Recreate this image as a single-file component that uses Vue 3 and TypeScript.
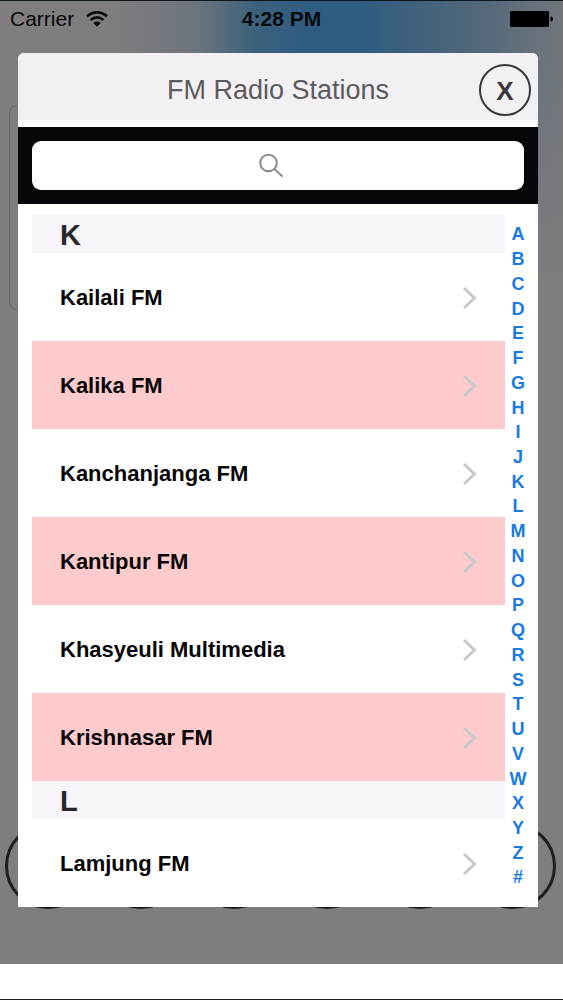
<script setup lang="ts">
import { ref } from 'vue'

interface Section {
  letter: string
  stations: string[]
}

const sections: Section[] = [
  {
    letter: 'K',
    stations: [
      'Kailali FM',
      'Kalika FM',
      'Kanchanjanga FM',
      'Kantipur FM',
      'Khasyeuli Multimedia',
      'Krishnasar FM',
    ],
  },
  { letter: 'L', stations: ['Lamjung FM'] },
]

const letters: string[] = [...'ABCDEFGHIJKLMNOPQRSTUVWXYZ#']
const query = ref('')
</script>

<template>
  <div class="screen">
    <div class="backdrop">
      <div class="card-outline"></div>
      <div class="dock">
        <span v-for="n in 6" :key="n" class="dock-button"></span>
      </div>

      <header class="status">
        <div class="carrier">
          <span>Carrier</span>
          <svg class="wifi" width="22" height="16" viewBox="0 0 22 16" aria-hidden="true">
            <path d="M1 5.2Q11 -2.6 21 5.2" />
            <path d="M4.6 9Q11 3.8 17.4 9" />
            <path class="wifi-dot" d="M7.4 12Q11 9.2 14.6 12L11 15.8Z" />
          </svg>
        </div>
        <span class="time">4:28 PM</span>
        <svg class="battery" width="43" height="17" viewBox="0 0 43 17" aria-hidden="true">
          <rect x="0" y="0" width="39" height="16" rx="1.5" />
          <path d="M40.5 5.5Q43 5.5 43 8Q43 10.500 40.500 10.500Z" />
        </svg>
      </header>

      <main class="modal">
        <div class="modal-header">
          <h1>FM Radio Stations</h1>
          <button type="button" class="close" aria-label="Close">X</button>
        </div>

        <div class="search-bar">
          <label class="search">
            <input v-model="query" type="text" aria-label="Search stations" />
            <svg width="26" height="26" viewBox="0 0 26 26" aria-hidden="true">
              <circle cx="10.500" cy="10" r="8.300" />
              <path d="M16.400 16L24.500 23.500" />
            </svg>
          </label>
        </div>

        <div class="body">
          <div class="stations">
            <section v-for="section in sections" :id="section.letter" :key="section.letter">
              <h2>{{ section.letter }}</h2>
              <ul>
                <li v-for="station in section.stations" :key="station">
                  <a href="#" class="row">
                    <span>{{ station }}</span>
                    <svg width="16" height="24" viewBox="0 0 16 24" aria-hidden="true">
                      <path d="M2 2L12.500 12L2 22" />
                    </svg>
                  </a>
                </li>
              </ul>
            </section>
          </div>
          <nav class="index" aria-label="Alphabet">
            <a v-for="letter in letters" :key="letter" :href="'#' + letter">{{ letter }}</a>
          </nav>
        </div>
      </main>
    </div>
  </div>
</template>

<style>
body {
  margin: 0;
}
</style>

<style scoped>
.screen {
  box-sizing: border-box;
  display: flex;
  flex-direction: column;
  min-height: 100vh;
  padding-bottom: 35px;
  border-top: 1px solid #10151c;
  border-bottom: 1px solid #1c1a1e;
  background: #fff;
  font-family: 'Liberation Sans', Arial, sans-serif;
}

.backdrop {
  position: relative;
  flex: 1;
  padding-bottom: 57px;
  background:
    linear-gradient(to bottom, rgba(128, 125, 128, 0) 50px, #807d80 300px),
    linear-gradient(
      to right,
      #807d80 20%,
      #6d747c 35%,
      #3d617c 45%,
      #2f5d82 54%,
      #2f5d82 64%,
      #3e607c 73%,
      #56697a 87%,
      #6b747c 97%,
      #707579 100%
    );
}

.card-outline {
  position: absolute;
  top: 104px;
  left: 9px;
  right: 40px;
  height: 203px;
  border: 1px solid #6b696b;
  border-radius: 8px;
}

.dock {
  position: absolute;
  left: 5px;
  right: 7px;
  bottom: 55px;
  display: flex;
  justify-content: space-between;
}

.dock-button {
  box-sizing: border-box;
  width: 86px;
  height: 86px;
  border: 3px solid #1f1d20;
  border-radius: 50%;
}

.status {
  display: grid;
  grid-template-columns: 1fr auto 1fr;
  align-items: center;
  height: 36px;
  padding: 0 10px;
  color: #08090b;
  font-size: 21px;
  line-height: 24px;
}

.carrier {
  display: flex;
  align-items: center;
  gap: 12px;
}

.wifi {
  fill: none;
  stroke: #08090b;
  stroke-width: 2.5;
}

.wifi .wifi-dot {
  fill: #08090b;
  stroke: none;
}

.time {
  font-weight: bold;
}

.battery {
  justify-self: end;
  fill: #000;
}

.modal {
  position: relative;
  margin: 16px 25px 0 18px;
  overflow: hidden;
  border-radius: 6px 6px 0 0;
  background: #fff;
}

.modal-header {
  display: grid;
  grid-template-columns: 1fr auto 1fr;
  align-items: center;
  box-sizing: border-box;
  height: 74px;
  padding: 6px 7px 0;
  border-bottom: 7px solid #fff;
  background: #f2f0f3;
}

h1 {
  grid-column: 2;
  margin: 0;
  color: #5c5a5e;
  font-size: 27px;
  font-weight: normal;
  line-height: 32px;
}

.close {
  justify-self: end;
  box-sizing: border-box;
  width: 52px;
  height: 52px;
  padding: 2px 0 0;
  border: 2px solid #39373b;
  border-radius: 50%;
  background: none;
  color: #39373b;
  font: bold 26px/32px 'Liberation Sans', Arial, sans-serif;
}

.search-bar {
  padding: 14px;
  background: #08060a;
}

.search {
  position: relative;
  display: block;
}

.search input {
  display: block;
  box-sizing: border-box;
  width: 100%;
  height: 49px;
  padding: 0 16px;
  border: 0;
  border-radius: 9px;
  outline: none;
  background: #fff;
  font-size: 22px;
  text-align: center;
}

.search svg {
  position: absolute;
  top: 12px;
  left: calc(50% - 20px);
  fill: none;
  stroke: #8b898e;
  stroke-width: 2;
}

.body {
  display: flex;
  padding: 11px 0 0 14px;
}

.stations {
  flex: 1;
}

h2 {
  margin: 0;
  padding: 2px 28px 0;
  background: #f7f5f9;
  color: #29272b;
  font-size: 29px;
  font-weight: bold;
  line-height: 36px;
}

ul {
  margin: 0;
  padding: 0;
  list-style: none;
}

.row {
  box-sizing: border-box;
  display: flex;
  align-items: center;
  justify-content: space-between;
  height: 88px;
  padding: 2px 27px 0 28px;
  color: #080608;
  font-size: 22px;
  font-weight: bold;
  line-height: 26px;
  text-decoration: none;
}

.row svg {
  fill: none;
  stroke: #c8c7cb;
  stroke-width: 3;
}

li:nth-child(even) .row {
  background: #fdcbcb;
}

.index {
  display: flex;
  flex-direction: column;
  width: 26px;
  margin-right: 7px;
  padding: 7px 0 17px;
}

.index a {
  display: flex;
  flex: 1;
  align-items: center;
  justify-content: center;
  color: #1a7ae0;
  font-size: 18px;
  font-weight: bold;
  line-height: 20px;
  text-decoration: none;
}
</style>
